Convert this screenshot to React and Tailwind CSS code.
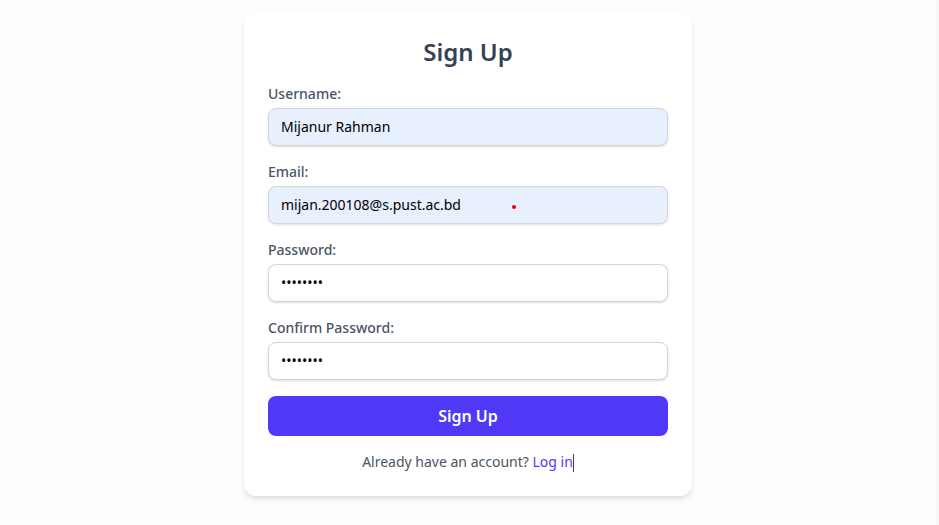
import { useState } from 'react';

const Field = ({ label, type, value, autofill, children }) => (
  <div>
    <label className="block text-sm font-medium text-gray-600 mb-1">{label}</label>
    <div className="relative">
      <input
        type={type}
        defaultValue={value}
        className={`w-full px-3 py-2 text-sm leading-5 text-black border border-gray-300 rounded-lg shadow-sm outline-none ${autofill ? 'bg-[#e8f0fe]' : 'bg-white'}`}
      />
      {children}
    </div>
  </div>
);

const App = () => {
  const [form] = useState({
    username: 'Mijanur Rahman',
    email: 'mijan.200108@s.pust.ac.bd',
    password: 'password',
    confirm: 'password',
  });

  return (
    <div className="min-h-screen flex bg-[#fdfdfd]" style={{ fontFamily: '"Noto Sans", "Open Sans", sans-serif' }}>
      <div className="flex-1 flex justify-center pt-3">
        <div className="w-[448px] h-fit bg-white rounded-xl shadow-md p-6">
          <h1 className="text-2xl font-semibold text-gray-700 text-center mb-4">Sign Up</h1>
          <form className="space-y-4" onSubmit={(e) => e.preventDefault()}>
            <Field label="Username:" type="text" value={form.username} autofill />
            <Field label="Email:" type="email" value={form.email} autofill>
              <span className="absolute left-[244px] top-[19px] w-1 h-1 rounded-full bg-red-600"></span>
            </Field>
            <Field label="Password:" type="password" value={form.password} />
            <Field label="Confirm Password:" type="password" value={form.confirm} />
            <button type="submit" className="w-full py-2 bg-indigo-600 text-white font-semibold rounded-lg">
              Sign Up
            </button>
          </form>
          <p className="mt-4 text-sm text-gray-600 text-center">
            Already have an account? <a className="text-indigo-600" href="#">Log in</a>
            <span className="inline-block w-px h-[18px] bg-indigo-700 align-middle"></span>
          </p>
        </div>
      </div>
      <div className="w-[3px] bg-[#f7f7f7]"></div>
    </div>
  );
};

export default App;
